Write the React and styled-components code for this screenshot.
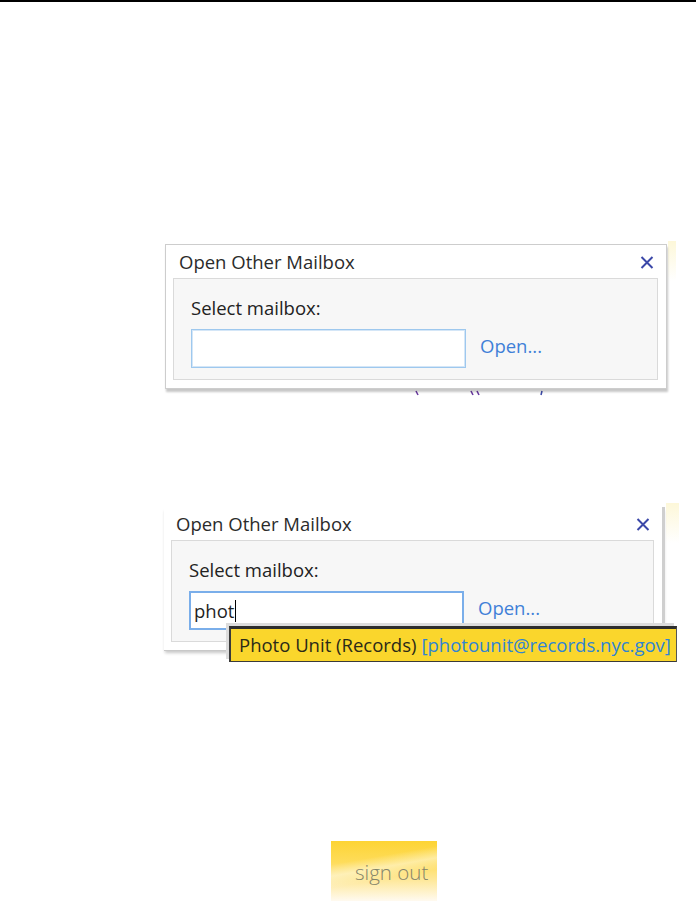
import React from "react";
import styled, { createGlobalStyle, css } from "styled-components";

const Global = createGlobalStyle`
  html, body { margin: 0; padding: 0; background: #ffffff; }
  body { font-family: "Open Sans", "Noto Sans", "Liberation Sans", sans-serif; }
  * { box-sizing: border-box; }
`;

const Page = styled.div`
  width: 696px;
  height: 901px;
  overflow: hidden;
  display: flex;
  flex-direction: column;
  align-items: flex-start;
`;

const TopRule = styled.div`
  width: 100%;
  height: 2px;
  background: #000;
  flex: none;
`;

const Frame = styled.div`
  position: relative;
  flex: none;
  width: ${(p) => p.$width}px;
  margin-top: ${(p) => p.$top}px;
  margin-left: ${(p) => p.$left}px;
  background: #fff;
  display: flex;
  flex-direction: column;
  ${(p) =>
    p.$cropped
      ? css`
          border-right: 3px solid #cfcfcf;
          border-bottom: 1px solid #c8c8c8;
          box-shadow: 0 3px 3px -1px rgba(0, 0, 0, 0.22);
        `
      : css`
          border: 1px solid #cdcdcd;
          box-shadow: 1px 3px 2px rgba(0, 0, 0, 0.22);
        `}
  &::after {
    content: "";
    position: absolute;
    top: -4px;
    right: ${(p) => (p.$cropped ? -17 : -10)}px;
    width: ${(p) => (p.$cropped ? 13 : 8)}px;
    height: 40px;
    background: linear-gradient(180deg, rgba(250, 238, 170, 0.45), rgba(255, 255, 255, 0));
  }
`;

const Header = styled.div`
  height: 33px;
  display: flex;
  align-items: flex-start;
  justify-content: space-between;
  padding: 5px 12px 0 ${(p) => p.$pad}px;
`;

const Title = styled.div`
  font-size: 18.5px;
  line-height: 24px;
  color: #2b2b2b;
`;

const CloseIcon = styled.svg`
  width: 14px;
  height: 13px;
  margin-top: 6px;
  flex: none;
`;

const Panel = styled.div`
  margin: 0 8px 8px 7px;
  height: 102px;
  border: 1px solid #dadada;
  background: #f7f7f7;
  padding: 17px 0 0 17px;
  display: flex;
  flex-direction: column;
  gap: 9px;
`;

const Label = styled.div`
  font-size: 18.5px;
  line-height: 24px;
  color: #222;
`;

const Row = styled.div`
  display: flex;
  align-items: center;
  gap: 14px;
`;

const InputBox = styled.div`
  width: 275px;
  height: 39px;
  background: #fff;
  display: flex;
  align-items: center;
  padding-left: 3px;
  font-size: 18.5px;
  line-height: 24px;
  color: #1f1f1f;
  ${(p) =>
    p.$focused
      ? css`
          border: 2px solid #7aaeea;
        `
      : css`
          border: 1px solid #9ec8ee;
          box-shadow: inset 0 0 0 1px #d4e6f7;
        `}
`;

const Caret = styled.span`
  display: inline-block;
  width: 0;
  height: 22px;
  border-right: 1.5px solid #000;
  margin-left: 1px;
  vertical-align: middle;
`;

const OpenLink = styled.span`
  font-size: 18.5px;
  line-height: 24px;
  color: #3f80d8;
  padding-bottom: 6px;
`;

const Fragments = styled.svg`
  display: block;
  margin-left: 410px;
  margin-top: 1px;
  width: 140px;
  height: 6px;
  flex: none;
`;

const Suggest = styled.div`
  position: absolute;
  left: 65px;
  top: 119px;
  width: 448px;
  height: 36px;
  background: #fad62c;
  border-top: 3px solid #2e2e2e;
  border-left: 2px solid #3a3a3a;
  border-bottom: 1px solid #3a3a3a;
  border-right: 1px solid #555;
  box-shadow: -3px -3px 0 #dcdcdc;
  display: flex;
  align-items: center;
  padding-left: 8px;
  font-size: 18.5px;
  line-height: 24px;
  white-space: nowrap;
  z-index: 2;
`;

const SuggestName = styled.span`
  color: #2a2a18;
`;

const SuggestMail = styled.span`
  color: #2f84d4;
  margin-left: 5px;
`;

const SignOut = styled.div`
  flex: none;
  margin-top: 190px;
  margin-left: 331px;
  width: 106px;
  height: 60px;
  background:
    linear-gradient(170deg, rgba(255, 255, 255, 0) 30%, rgba(255, 250, 225, 0.55) 45%, rgba(255, 255, 255, 0) 60%),
    linear-gradient(180deg, #fdd434 0%, #fedc5a 35%, #fee89a 65%, #fffaf0 100%);
  display: flex;
  align-items: center;
  padding: 2px 0 0 24px;
  font-size: 20.5px;
  font-weight: 300;
  color: #85846a;
`;

function Close() {
  return (
    <CloseIcon viewBox="0 0 14 13">
      <path d="M1.5 1 L12.5 12 M12.5 1 L1.5 12" stroke="#3b48a8" strokeWidth="2" fill="none" />
    </CloseIcon>
  );
}

function Dialog({ cropped, top, left, value, children }) {
  return (
    <Frame $cropped={cropped} $top={top} $left={left} $width={cropped ? 501 : 502}>
      <Header $pad={cropped ? 12 : 13}>
        <Title>Open Other Mailbox</Title>
        <Close />
      </Header>
      <Panel>
        <Label>Select mailbox:</Label>
        <Row>
          <InputBox $focused={cropped}>
            {value}
            {cropped && <Caret />}
          </InputBox>
          <OpenLink>Open...</OpenLink>
        </Row>
      </Panel>
      {children}
    </Frame>
  );
}

export default function App() {
  return (
    <Page>
      <Global />
      <TopRule />
      <Dialog top={242} left={165} value="" />
      <Fragments viewBox="0 0 140 6">
        <path d="M6 1 L8 5" stroke="#6a3aa0" strokeWidth="1.6" />
        <path d="M61 1 L63 5 M67 1 L69 5" stroke="#6a3aa0" strokeWidth="1.6" />
        <path d="M132 1 L131 5" stroke="#3b4aa8" strokeWidth="1.6" />
      </Fragments>
      <Dialog cropped top={111} left={164} value="phot">
        <Suggest>
          <SuggestName>Photo Unit (Records)</SuggestName>
          <SuggestMail>[photounit@records.nyc.gov]</SuggestMail>
        </Suggest>
      </Dialog>
      <SignOut>sign out</SignOut>
    </Page>
  );
}
